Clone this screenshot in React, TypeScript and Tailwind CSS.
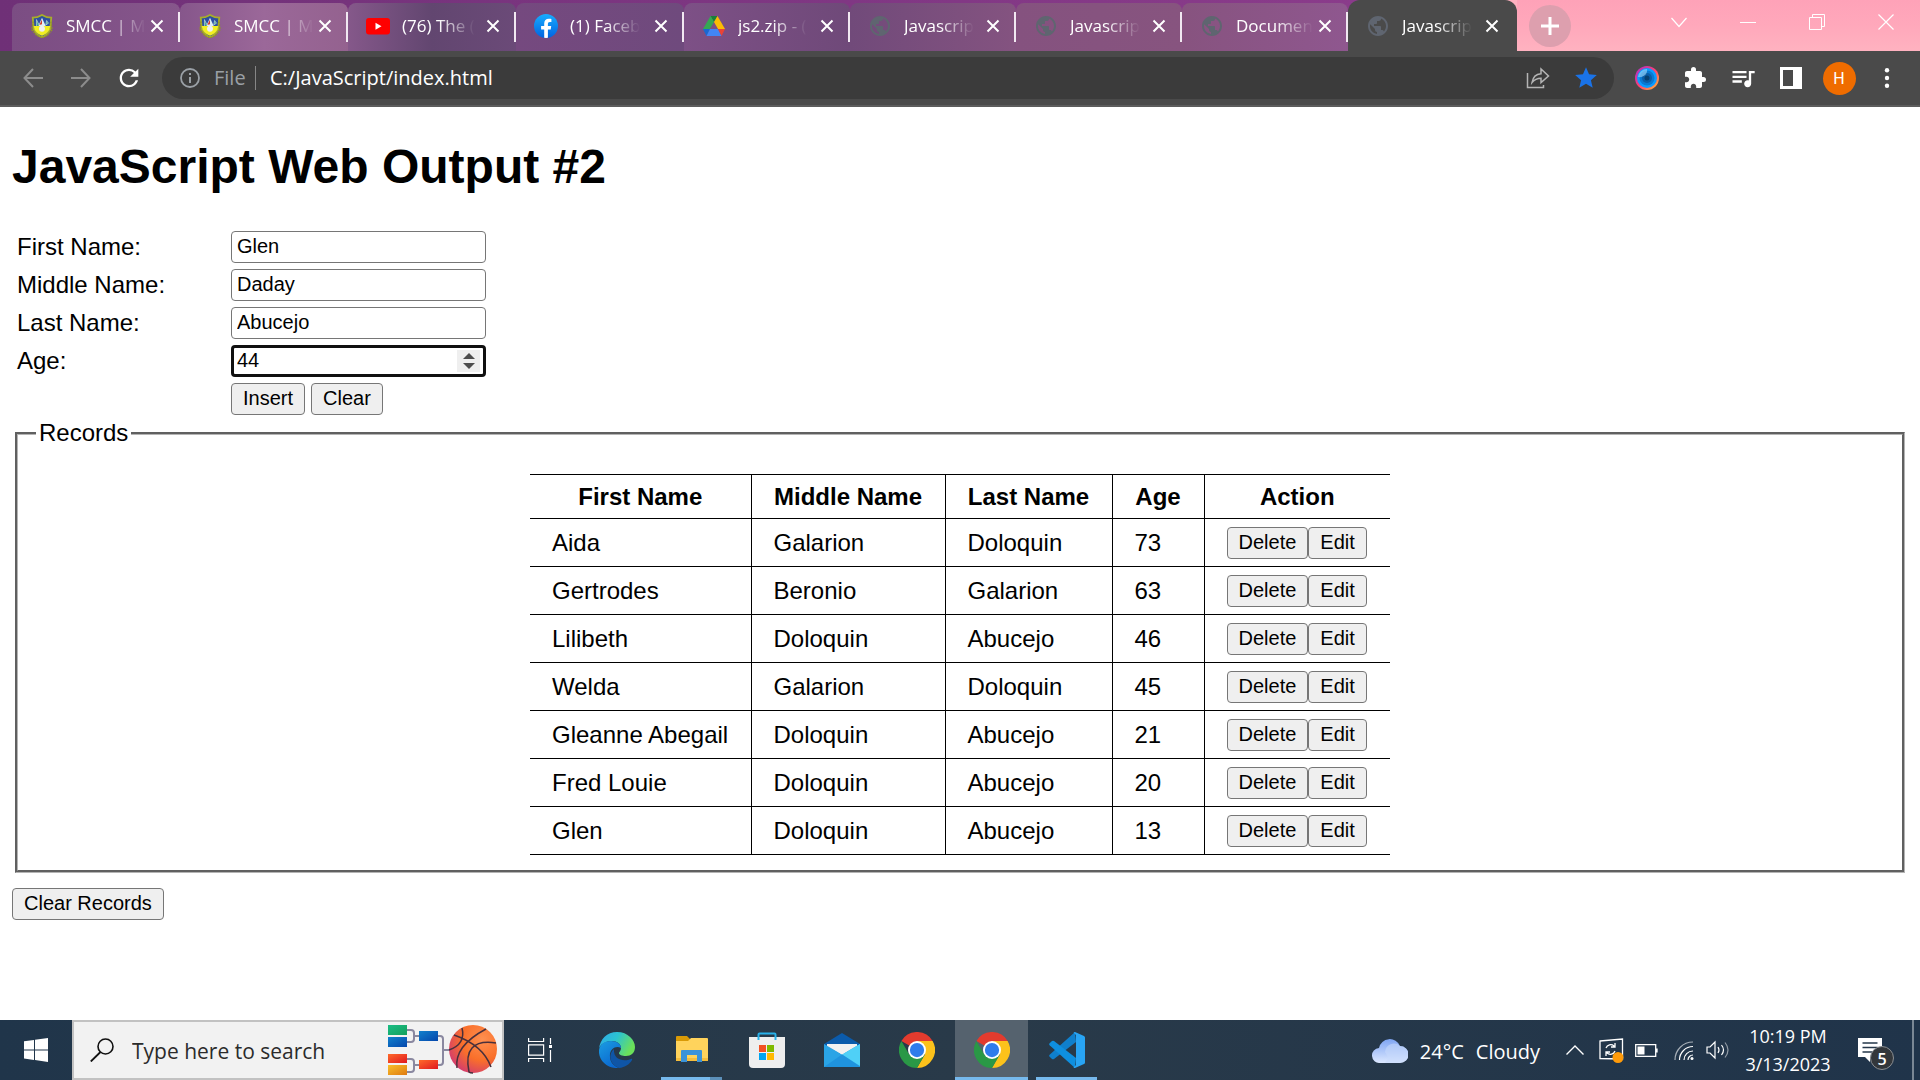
import { useState, type ReactNode } from "react";
import { MdExtension, MdQueueMusic, MdRefresh, MdStar, MdPublic } from "react-icons/md";

type Person = { first: string; middle: string; last: string; age: number };

const initialRecords: Person[] = [
  { first: "Aida", middle: "Galarion", last: "Doloquin", age: 73 },
  { first: "Gertrodes", middle: "Beronio", last: "Galarion", age: 63 },
  { first: "Lilibeth", middle: "Doloquin", last: "Abucejo", age: 46 },
  { first: "Welda", middle: "Galarion", last: "Doloquin", age: 45 },
  { first: "Gleanne Abegail", middle: "Doloquin", last: "Abucejo", age: 21 },
  { first: "Fred Louie", middle: "Doloquin", last: "Abucejo", age: 20 },
  { first: "Glen", middle: "Doloquin", last: "Abucejo", age: 13 },
];

/* ---------- tab icons ---------- */

function CrestIcon() {
  return (
    <svg viewBox="0 0 24 26" className="h-6 w-6">
      <path d="M2 4 Q7 4 12 1 Q17 4 22 4 L21 16 Q18 23 12 25 Q6 23 3 16Z" fill="#2c4fa0" stroke="#a8ad2b" strokeWidth="2" />
      <path d="M3 13H21L20 17Q17 22 12 23.500Q7 22 4 17Z" fill="#f2ef22" />
      <path d="M12 4 16 13H8Z" fill="#dfeef5" />
      <path d="M12 6 9 12l3-1Z" fill="#d33a2c" />
      <path d="M6 13V6l3 6M17 7l2 3-3 2Z" fill="#4fae8d" stroke="#d8e8ee" strokeWidth=".6" />
      <circle cx="12" cy="16" r="3.200" fill="#eeeef0" />
      <path d="M2.500 8 1 17l5 6 6 3 6-3 5-6-1.500-9" fill="none" stroke="#8f9429" strokeWidth="1.500" strokeDasharray="2 1" />
    </svg>
  );
}

function YoutubeIcon() {
  return (
    <svg viewBox="0 0 24 24" className="h-6 w-6">
      <rect x="0" y="4" width="24" height="16.500" rx="3" fill="#f00" />
      <path d="M9.500 8.800v7l6-3.500z" fill="#fff" />
    </svg>
  );
}

function FacebookIcon() {
  return (
    <svg viewBox="0 0 24 24" className="h-6 w-6">
      <defs>
        <linearGradient id="fb" x2="0" y2="1">
          <stop stopColor="#18acfe" />
          <stop offset="1" stopColor="#0163e0" />
        </linearGradient>
      </defs>
      <circle cx="12" cy="12" r="12" fill="url(#fb)" />
      <path d="M16.700 15.500l.5-3.500h-3.300V9.800c0-1 .5-1.900 2-1.900h1.500V5s-1.400-.2-2.700-.2c-2.700 0-4.500 1.700-4.500 4.700V12H7.100v3.500h3.100v8.300a12 12 0 003.700 0v-8.300z" fill="#fff" />
    </svg>
  );
}

function DriveIcon() {
  return (
    <svg viewBox="0 0 24 24" className="h-6 w-6">
      <path d="M8.500 2h7L12 8z" fill="#188038" />
      <path d="M8.500 2 12 8 4.500 20.500 1 15z" fill="#34a853" />
      <path d="M15.500 2 23 15h-7L12 8z" fill="#fbbc04" />
      <path d="M1 15h7l-3.500 7z" fill="#1967d2" />
      <path d="M8 15h8l3.500 7h-15z" fill="#4285f4" />
      <path d="M16 15h7l-3.500 7z" fill="#ea4335" />
    </svg>
  );
}

function Globe() {
  return <MdPublic className="h-6 w-6 text-[#5f6570]" />;
}

function CloseIcon() {
  return (
    <svg viewBox="0 0 14 14" className="h-3.5 w-3.5">
      <path d="M1.500 1.500l11 11M12.500 1.500l-11 11" stroke="#fff" strokeWidth="2" />
    </svg>
  );
}

type TabInfo = { title: string; icon: ReactNode; look: string };

const tabs: TabInfo[] = [
  { title: "SMCC | M", icon: <CrestIcon />, look: "w-[168px] bg-linear-to-r from-[#7b4d83] to-[#86568b]" },
  { title: "SMCC | M", icon: <CrestIcon />, look: "w-[168px] bg-linear-to-r from-[#86568b] via-[#9b6899] to-[#94628f]" },
  { title: "(76) The (", icon: <YoutubeIcon />, look: "w-[168px] bg-linear-to-r from-[#85588a] via-[#624670] to-[#6b4a78]" },
  { title: "(1) Faceb", icon: <FacebookIcon />, look: "w-[168px] bg-linear-to-r from-[#75497f] to-[#6f4a7d]" },
  { title: "js2.zip - (", icon: <DriveIcon />, look: "w-[166px] bg-linear-to-r from-[#7d5086] to-[#6f4979]" },
  { title: "Javascrip", icon: <Globe />, look: "w-[166px] bg-linear-to-r from-[#714a7a] to-[#845380]" },
  { title: "Javascrip", icon: <Globe />, look: "w-[166px] bg-linear-to-r from-[#85527f] to-[#87547f]" },
  { title: "Documen", icon: <Globe />, look: "w-[166px] bg-linear-to-r from-[#87537f] to-[#8f578f]" },
];

function Tab({ title, icon, look, active = false }: TabInfo & { active?: boolean }) {
  return (
    <div
      className={`flex min-w-0 items-center ${look} ${
        active ? "h-[51px] rounded-t-xl" : "mt-[3px] h-12 rounded-t-lg"
      }`}
    >
      <button className={`flex min-w-0 flex-1 items-center gap-3 pl-[18px] ${active ? "" : "-mt-[3px]"}`}>
        <span className="shrink-0">{icon}</span>
        <span className="min-w-0 text-left text-[17px] leading-6 whitespace-nowrap text-white mask-r-from-50%">
          {title}
        </span>
      </button>
      <button aria-label={`Close ${title}`} className={`shrink-0 ${active ? "mr-[18px]" : "mr-3.5 -mt-[3px]"}`}>
        <CloseIcon />
      </button>
      {!active && <span className="h-[30px] w-0.5 shrink-0 bg-[#f1e8f1]" />}
    </div>
  );
}

function TabStrip() {
  return (
    <div className="flex h-[51px] bg-linear-to-r from-[#6f3077] via-[#8c3c8c] via-75% to-[#ffb1c0] to-75% pl-3">
      {tabs.map((t, i) => (
        <Tab key={i} {...t} />
      ))}
      <Tab title="Javascrip" icon={<Globe />} look="w-[169px] bg-[#4a4a4a]" active />
      <div className="flex flex-1 items-center bg-linear-to-b from-[#fea2b8] via-[#ffa8bb] to-[#ffb2c0] pl-3">
        <button aria-label="New tab" className="grid h-[42px] w-[42px] place-items-center rounded-full bg-[#dd9fae]">
          <svg viewBox="0 0 18 18" className="h-[18px] w-[18px]">
            <path d="M9 0v18M0 9h18" stroke="#fff" strokeWidth="3" />
          </svg>
        </button>
        <div className="mb-2 ml-auto flex h-8 items-center">
          <button aria-label="Search tabs" className="grid w-[69px] place-items-center">
            <svg viewBox="0 0 16 16" className="h-4 w-4">
              <path d="M.5 4 8 12.500 15.500 4" fill="none" stroke="#fff" strokeWidth="1.200" />
            </svg>
          </button>
          <button aria-label="Minimize" className="grid w-[69px] place-items-center">
            <svg viewBox="0 0 16 16" className="h-4 w-4">
              <path d="M0 8.500h16" stroke="#fff" />
            </svg>
          </button>
          <button aria-label="Restore" className="grid w-[69px] place-items-center">
            <svg viewBox="0 0 16 16" className="h-4 w-4">
              <path d="M.5 3.500h12v12H.5zM3.500 3.500V.5h12v12h-3" fill="none" stroke="#fff" />
            </svg>
          </button>
          <button aria-label="Close window" className="grid w-[69px] place-items-center">
            <svg viewBox="0 0 16 16" className="h-4 w-4">
              <path d="M.5.500l15 15M15.500.500l-15 15" stroke="#fff" strokeWidth="1.200" />
            </svg>
          </button>
        </div>
      </div>
    </div>
  );
}

/* ---------- toolbar ---------- */

const toolButton = "grid h-8 w-12 shrink-0 place-items-center";

function Arrow({ flip = false }: { flip?: boolean }) {
  return (
    <svg viewBox="0 0 20 20" className={flip ? "h-5 w-5 rotate-180" : "h-5 w-5"}>
      <path d="M20 10H1.500M10 1 1.500 10l8.500 9" fill="none" stroke="#8c8c8c" strokeWidth="2" />
    </svg>
  );
}

function Toolbar() {
  return (
    <div className="flex h-14 items-center border-b-2 border-[#5c5c5c] bg-[#4a4a4a] px-[9px]">
      <button aria-label="Back" className={toolButton}>
        <Arrow />
      </button>
      <button aria-label="Forward" className={toolButton}>
        <Arrow flip />
      </button>
      <button aria-label="Reload" className={toolButton}>
        <MdRefresh className="h-7 w-7 text-white" />
      </button>
      <div className="ml-[9px] flex h-[42px] flex-1 items-center rounded-full bg-[#3b3b3b] pr-1 pl-[18px] text-xl">
        <svg viewBox="0 0 20 20" className="h-5 w-5">
          <circle cx="10" cy="10" r="9" fill="none" stroke="#9aa0a6" strokeWidth="1.800" />
          <path d="M10 9v6M10 5v2" stroke="#9aa0a6" strokeWidth="2" />
        </svg>
        <span className="ml-3.5 w-[41px] text-[#9aa0a6]">File</span>
        <span className="h-6 w-px bg-[#868686]" />
        <input aria-label="Address" defaultValue="C:/JavaScript/index.html" className="ml-3.5 min-w-0 flex-1 text-white outline-none" />
        <button aria-label="Share" className={toolButton}>
          <svg viewBox="0 0 24 24" className="h-6 w-6">
            <path d="M1.500 7v14.500h16V19M6 16.500c1-6 4-8.500 9-8.800V3l7.500 7-7.500 6.500v-4.300c-4 0-6.500 1.200-9 4.300z" fill="none" stroke="#b4b4b4" strokeWidth="1.500" />
          </svg>
        </button>
        <button aria-label="Bookmark" className={toolButton}>
          <MdStar className="h-[26px] w-[26px] text-[#1a73e8]" />
        </button>
      </div>
      <div className="ml-[9px] flex items-center">
        <button aria-label="Lens extension" className={toolButton}>
          <svg viewBox="0 0 24 24" className="h-6 w-6">
            <defs>
              <linearGradient id="ring" x1="0" x2="1" y2="1">
                <stop stopColor="#a12fd0" />
                <stop offset=".5" stopColor="#ff3f74" />
                <stop offset="1" stopColor="#ffc22e" />
              </linearGradient>
            </defs>
            <circle cx="12" cy="12" r="12" fill="url(#ring)" />
            <circle cx="12" cy="12" r="10" fill="#0a9cff" />
            <circle cx="12" cy="12" r="7.500" fill="#0879d2" />
            <circle cx="12" cy="12" r="5" fill="#0a5da6" />
            <circle cx="12" cy="12" r="2.500" fill="#07406f" />
            <path d="M3 11a9 9 0 0 1 9-8c1 4-3 9-9 8z" fill="#9bd3f5" opacity=".65" />
          </svg>
        </button>
        <button aria-label="Extensions" className={toolButton}>
          <MdExtension className="h-6 w-6 text-white" />
        </button>
        <button aria-label="Media" className={toolButton}>
          <MdQueueMusic className="h-7 w-7 text-white" />
        </button>
        <button aria-label="Side panel" className={toolButton}>
          <svg viewBox="0 0 22 22" className="h-[22px] w-[22px]">
            <path d="M0 0h22v22H0zM3 3v16h10V3z" fill="#fff" fillRule="evenodd" />
          </svg>
        </button>
        <button aria-label="Profile" className={toolButton}>
          <span className="grid h-[33px] w-[33px] place-items-center rounded-full bg-[#ef6c00] font-[Roboto] text-base text-white">H</span>
        </button>
        <button aria-label="Menu" className={toolButton}>
          <svg viewBox="0 0 20 20" className="h-5 w-5" fill="#fff">
            <circle cx="10" cy="2.200" r="2.200" />
            <circle cx="10" cy="10" r="2.200" />
            <circle cx="10" cy="17.800" r="2.200" />
          </svg>
        </button>
      </div>
    </div>
  );
}

/* ---------- page ---------- */

const pageButton =
  "h-8 rounded border border-[#767676] bg-[#efefef] px-[11px] pb-0.5 text-xl leading-6 text-black hover:bg-[#e5e5e5]";
const textBox = "h-8 w-[255px] rounded border border-[#767676] bg-white px-[5px] pb-0.5 text-xl leading-6";

const columns = [
  { label: "First Name", width: "w-[221px]" },
  { label: "Middle Name", width: "w-[194px]" },
  { label: "Last Name", width: "w-[167px]" },
  { label: "Age", width: "w-[92px]" },
  { label: "Action", width: "w-[186px]" },
];

const cell = "border-y border-black px-[22px] not-first:border-l";

function Page() {
  const [form, setForm] = useState({ first: "Glen", middle: "Daday", last: "Abucejo", age: "44" });
  const [records, setRecords] = useState(initialRecords);
  const set = (key: keyof typeof form, value: string) => setForm({ ...form, [key]: value });
  const clear = () => setForm({ first: "", middle: "", last: "", age: "" });
  const step = (by: number) => set("age", String(Number(form.age) + by));
  const remove = (i: number) => setRecords(records.filter((_, n) => n !== i));
  const insert = () => {
    setRecords([...records, { first: form.first, middle: form.middle, last: form.last, age: Number(form.age) }]);
    clear();
  };
  const edit = (i: number) => {
    setForm({ ...records[i], age: String(records[i].age) });
    remove(i);
  };

  return (
    <main className="flex-1 bg-white px-3 pt-8 font-['Liberation_Sans',sans-serif] text-2xl leading-7 text-black">
      <h1 className="text-5xl leading-14 font-bold">JavaScript Web Output #2</h1>
      <div className="mt-9 grid grid-cols-[214px_1fr] items-center gap-y-1.5 pl-[5px]">
        <label htmlFor="first">First Name:</label>
        <input id="first" className={textBox} value={form.first} onChange={(e) => set("first", e.target.value)} />
        <label htmlFor="middle">Middle Name:</label>
        <input id="middle" className={textBox} value={form.middle} onChange={(e) => set("middle", e.target.value)} />
        <label htmlFor="last">Last Name:</label>
        <input id="last" className={textBox} value={form.last} onChange={(e) => set("last", e.target.value)} />
        <label htmlFor="age">Age:</label>
        <div className="relative w-[255px]">
          <input
            id="age"
            type="number"
            value={form.age}
            onChange={(e) => set("age", e.target.value)}
            className="block h-8 w-full rounded border-[3px] border-[#101010] bg-white px-[3px] pb-0.5 text-xl leading-6 outline-none [appearance:textfield] [&::-webkit-inner-spin-button]:appearance-none"
          />
          <div className="absolute inset-y-[5px] right-1.5 flex w-[23px] flex-col items-center justify-center gap-1 bg-[#efefef]">
            <button aria-label="Increase age" onClick={() => step(1)}>
              <svg viewBox="0 0 12 6" className="h-1.5 w-3">
                <path d="M0 6h12L6 0z" fill="#4d4d4d" />
              </svg>
            </button>
            <button aria-label="Decrease age" onClick={() => step(-1)}>
              <svg viewBox="0 0 12 6" className="h-1.5 w-3">
                <path d="M0 0h12L6 6z" fill="#4d4d4d" />
              </svg>
            </button>
          </div>
        </div>
        <div className="col-start-2 flex gap-1.5">
          <button className={pageButton} onClick={insert}>Insert</button>
          <button className={pageButton} onClick={clear}>Clear</button>
        </div>
      </div>
      <fieldset className="mx-[3px] mt-1 border-[3px] border-[#b4b4b4] px-[18px] pt-[27px] pb-[15px] [border-style:groove]">
        <legend className="px-[3px]">Records</legend>
        <table className="mx-auto table-fixed border-collapse">
          <thead>
            <tr className="h-11">
              {columns.map((c) => (
                <th key={c.label} className={`${cell} ${c.width} whitespace-nowrap`}>{c.label}</th>
              ))}
            </tr>
          </thead>
          <tbody>
            {records.map((r, i) => (
              <tr key={i} className="h-12">
                <td className={`${cell} whitespace-nowrap`}>{r.first}</td>
                <td className={cell}>{r.middle}</td>
                <td className={cell}>{r.last}</td>
                <td className={cell}>{r.age}</td>
                <td className={cell}>
                  <div className="flex">
                    <button className={pageButton} onClick={() => remove(i)}>Delete</button>
                    <button className={pageButton} onClick={() => edit(i)}>Edit</button>
                  </div>
                </td>
              </tr>
            ))}
          </tbody>
        </table>
      </fieldset>
      <button className={`${pageButton} mt-[15px] block`} onClick={() => setRecords([])}>Clear Records</button>
    </main>
  );
}

/* ---------- taskbar ---------- */

function BracketArt() {
  return (
    <svg viewBox="0 0 110 52" className="mr-1 h-[52px] w-[110px] shrink-0">
      <defs>
        <linearGradient id="green" x2="1" y2="1"><stop stopColor="#1bbd85" /><stop offset="1" stopColor="#12a05c" /></linearGradient>
        <linearGradient id="blue" x2="1" y2="1"><stop stopColor="#1180cc" /><stop offset="1" stopColor="#0547ac" /></linearGradient>
        <linearGradient id="red" x2="1" y2="1"><stop stopColor="#ff6a2a" /><stop offset="1" stopColor="#e0181f" /></linearGradient>
        <linearGradient id="gold" x2="1" y2="1"><stop stopColor="#f9be2a" /><stop offset="1" stopColor="#df7a10" /></linearGradient>
        <radialGradient id="ball" cx=".7" cy=".3" r=".8"><stop stopColor="#ff9050" /><stop offset=".55" stopColor="#f96f2a" /><stop offset="1" stopColor="#d23a70" /></radialGradient>
      </defs>
      <path d="M19 6h4q3 0 3 3v6q0 3-3 3h-4M26 12h6M19 35h4q3 0 3 3v7q0 3-3 3h-4M26 41h6M50 12h2q3 0 3 3v23q0 3-3 3h-2M55 26h7" fill="none" stroke="#8a88a0" strokeWidth="2" />
      <rect y="1" width="19" height="10" fill="url(#green)" />
      <rect y="13" width="19" height="10" fill="url(#blue)" />
      <rect y="30" width="19" height="9" fill="url(#red)" />
      <rect y="41" width="19" height="10" fill="url(#gold)" />
      <rect x="31" y="7" width="19" height="10" fill="url(#blue)" />
      <rect x="31" y="36" width="19" height="9" fill="url(#red)" />
      <circle cx="85" cy="25" r="24" fill="url(#ball)" />
      <path d="M66 11q29 10 37 32M61 26q17-6 13-22M98 5Q66 22 69 44M108 19Q74 14 81 48Q82 49 85 49" fill="none" stroke="#49303c" strokeWidth="1.500" />
    </svg>
  );
}

function EdgeIcon() {
  return (
    <svg viewBox="0 0 36 36" className="h-9 w-9">
      <defs>
        <linearGradient id="edgeTop" x2="1" y2=".4"><stop stopColor="#2fa8ea" /><stop offset=".5" stopColor="#2bc3d2" /><stop offset="1" stopColor="#6be05a" /></linearGradient>
        <linearGradient id="edgeBody" x2=".6" y2="1"><stop stopColor="#1b9de2" /><stop offset="1" stopColor="#0a66cf" /></linearGradient>
      </defs>
      <path d="M0 17C1 7 8 0 18 0c11 0 18 8 18 15 0 6-4 9-9 9-4 0-7-1-7-3 0-1 2-2 2-5 0-4-4-7-9-7C7 9 1 12 0 17z" fill="url(#edgeTop)" />
      <path d="M0 18C1 12 6 9 12 9c6 0 10 3 10 7-5-3-12 1-11 9 0 5 4 9 9 11C8 37-1 28 0 18z" fill="url(#edgeBody)" />
      <path d="M15 17c-6 5-5 15 5 19 6-.5 11-4 13-8 .5-1-.3-1.500-1-1-7 3-18 1-17-10z" fill="#0f55a6" />
    </svg>
  );
}

function FolderIcon() {
  return (
    <svg viewBox="0 0 32 28" className="h-7 w-8">
      <path d="M0 1q0-1 1-1h10l4 4v4H0z" fill="#d99a06" />
      <path d="M0 5h12l3-3h16q1 0 1 1v22H0z" fill="#ffd35c" />
      <path d="M0 22h32v3H0z" fill="#f5bd3c" />
      <path d="M5 26V15q0-1 1-1h19q1 0 1 1v11h-5v-7H11v7z" fill="#3b93d9" />
    </svg>
  );
}

function StoreIcon() {
  return (
    <svg viewBox="0 0 36 36" className="h-9 w-9">
      <path d="M0 5h36v27q0 4-4 4H4q-4 0-4-4z" fill="#eeeeee" />
      <path d="M9.500 8V2.500q0-1 1-1h15q1 0 1 1V8" fill="none" stroke="#28b1ea" strokeWidth="2" />
      <path d="M10 13h7v7h-7z" fill="#f25022" />
      <path d="M18 13h7v7h-7z" fill="#7fba00" />
      <path d="M10 21h7v7h-7z" fill="#00a4ef" />
      <path d="M18 21h7v7h-7z" fill="#ffb900" />
    </svg>
  );
}

function MailIcon() {
  return (
    <svg viewBox="0 0 36 34" className="h-[34px] w-9">
      <path d="M0 11 18 0l18 11v6H0z" fill="#0b5bab" />
      <path d="M3 11h30v3L18 22 3 14z" fill="#f1f1f1" />
      <path d="M0 11 18 21.500 36 11v23H0z" fill="#2aa4e6" />
      <path d="M36 11v22L18 21.500z" fill="#4fd0f7" />
      <path d="M3 11h30L18 21.500z" fill="#f1f1f1" />
      <path d="M36 33.500 18 21.500 0 34h36z" fill="#1f93de" />
    </svg>
  );
}

function ChromeIcon() {
  return (
    <svg viewBox="0 0 48 48" className="h-9 w-9">
      <path d="M24 24 3.200 12A24 24 0 0 1 44.800 12z" fill="#e33b2e" />
      <path d="M24 12h20.800A24 24 0 0 1 24 48l10.400-18z" fill="#fcc21b" />
      <path d="M3.200 12A24 24 0 0 0 24 48l10.400-18-20.800 0z" fill="#2a9846" />
      <circle cx="24" cy="24" r="12" fill="#fff" />
      <circle cx="24" cy="24" r="9.500" fill="#2f7cec" />
    </svg>
  );
}

function CodeIcon() {
  return (
    <svg viewBox="0 0 36 36" className="h-9 w-9">
      <path d="M26 0 27 10 5 27q-1 .7-2 0L.6 24.800q-1-1 0-2z" fill="#0f7fcc" />
      <path d="M26 36 27 26 5 9q-1-.7-2 0L.6 11.200q-1 1 0 2z" fill="#0e8fe0" />
      <path d="M26 0l9 4q1 .5 1 1.500v25q0 1-1 1.500l-9 4q-1 .3-1.500-.5L27 33V3L24.500.500Q25 0 26 0z" fill="#28a4f4" />
    </svg>
  );
}

const apps = [
  { name: "Microsoft Edge", icon: <EdgeIcon />, bar: "" },
  { name: "File Explorer", icon: <FolderIcon />, bar: "bg-linear-to-r from-[#76b9ed] from-80% to-[#5c90ba] to-80%" },
  { name: "Microsoft Store", icon: <StoreIcon />, bar: "" },
  { name: "Mail", icon: <MailIcon />, bar: "" },
  { name: "Google Chrome", icon: <ChromeIcon />, bar: "" },
  { name: "Google Chrome window", icon: <ChromeIcon />, bar: "bg-[#76b9ed]", active: true },
  { name: "Visual Studio Code", icon: <CodeIcon />, bar: "bg-[#76b9ed]" },
];

function Taskbar() {
  return (
    <footer className="flex h-[60px] items-stretch bg-linear-to-r from-[#20354a] via-[#293a49] to-[#20344a] text-white">
      <button aria-label="Start" className="grid w-[72px] place-items-center">
        <svg viewBox="0 0 24 24" className="h-6 w-6" fill="#fff">
          <path d="M0 3.300 10 2v9.400H0zM11 1.800 24 0v11.400H11zM0 12.400h10V22L0 20.600zM11 12.400h13V24l-13-1.900z" />
        </svg>
      </button>
      <label className="flex w-[432px] items-center border-2 border-[#c2c2c2] bg-[#f2f2f2] pl-4">
        <svg viewBox="0 0 24 24" className="h-6 w-6 shrink-0">
          <circle cx="15.500" cy="8.500" r="7.500" fill="none" stroke="#111" strokeWidth="1.600" />
          <path d="M10.500 14 .8 23.500" stroke="#111" strokeWidth="1.800" />
        </svg>
        <input
          aria-label="Search"
          placeholder="Type here to search"
          className="ml-[18px] min-w-0 flex-1 pt-1 text-[21px] outline-none placeholder:text-[#2b2b2b]"
        />
        <BracketArt />
      </label>
      <button aria-label="Task view" className="mr-1 grid w-[72px] place-items-center">
        <svg viewBox="0 0 24 24" className="h-6 w-6" fill="none" stroke="#fff" strokeWidth="1.200">
          <path d="M.6 0v3.500h15V0M.6 24v-3.500h15V24M.6 6.800h15v10.400H.6zM22.500 0v6M22.500 12v12" />
          <path d="M21 7h3v3h-3z" fill="#fff" stroke="none" />
        </svg>
      </button>
      {apps.map((a) => (
        <button
          key={a.name}
          aria-label={a.name}
          className={`mr-0.5 flex w-[73px] flex-col items-center ${a.active ? "bg-[#55626e]" : ""}`}
        >
          <span className="grid w-full flex-1 place-items-center pt-[3px]">{a.icon}</span>
          <span className={`h-[3px] ${a.active ? "w-full" : "w-[61px]"} ${a.bar}`} />
        </button>
      ))}
      <div className="ml-auto flex items-center">
        <button className="flex items-center text-left text-xl">
          <svg viewBox="0 0 36 26" className="mr-3 h-[26px] w-9">
            <defs>
              <linearGradient id="cloud" x2="0" y2="1"><stop stopColor="#7fa5f3" /><stop offset="1" stopColor="#dce8ff" /></linearGradient>
            </defs>
            <path d="M8 26a7.500 7.500 0 0 1-1-15A11 11 0 0 1 28 9a8.500 8.500 0 0 1 0 17z" fill="url(#cloud)" />
            <path d="M13 15a9 9 0 0 1 15-6 8.500 8.500 0 0 1 0 17H13q5-5 0-11z" fill="#c9dafc" opacity=".55" />
          </svg>
          <span className="w-14 pt-1">24°C</span>
          <span className="pt-1">Cloudy</span>
        </button>
        <button aria-label="Hidden icons" className="ml-[26px]">
          <svg viewBox="0 0 18 10" className="h-2.5 w-[18px]">
            <path d="M.5 9.500 9 1l8.500 8.500" fill="none" stroke="#fff" strokeWidth="1.400" />
          </svg>
        </button>
        <button aria-label="Update" className="ml-[15px]">
          <svg viewBox="0 0 25 25" className="h-[25px] w-[25px]" fill="none" stroke="#fff" strokeWidth="1.300">
            <path d="M1 3 23.500 1v20L1 20.500z" />
            <path d="M7 10a5 5 0 0 1 8-2l1 1M16 5v4h-4M16 13a5 5 0 0 1-8 2l-1-1M7 18v-4h4" />
            <circle cx="19" cy="19.500" r="5.500" fill="#ff9b0a" stroke="none" />
          </svg>
        </button>
        <button aria-label="Battery" className="ml-[11px]">
          <svg viewBox="0 0 23 13" className="h-[13px] w-[23px]">
            <path d="M.7.700h20v11.600H.7zM22 4.500v4" fill="none" stroke="#fff" strokeWidth="1.300" />
            <path d="M2.500 2.500h7v8h-7z" fill="#fff" />
          </svg>
        </button>
        <button aria-label="Network" className="ml-4">
          <svg viewBox="0 0 20 20" className="h-5 w-5" fill="none" stroke="#fff" strokeWidth="1.200">
            <path d="M1 20A18 18 0 0 1 19 2" opacity=".6" />
            <path d="M5.500 20A13.500 13.500 0 0 1 19 6.500M10 20a9 9 0 0 1 9-9M14 20a5 5 0 0 1 5-5" />
            <circle cx="18" cy="18.500" r="1.500" fill="#fff" stroke="none" />
          </svg>
        </button>
        <button aria-label="Volume" className="ml-3">
          <svg viewBox="0 0 24 20" className="h-5 w-6" fill="none" stroke="#fff" strokeWidth="1.200">
            <path d="M1 7h3l5-5v16l-5-5H1zM12 7q2 3 0 6M15.500 5q4 5 0 10" />
            <path d="M19 2.500q6 7.500 0 15" opacity=".5" />
          </svg>
        </button>
        <button className="ml-3 w-[92px] text-center text-lg leading-7">
          <span className="block">10:19 PM</span>
          <span className="block">3/13/2023</span>
        </button>
        <button aria-label="5 notifications" className="relative ml-6 h-10 w-9">
          <svg viewBox="0 0 24 24" className="h-6 w-6">
            <path d="M0 0h24v19H12v5l-5-5H0z" fill="#fff" />
            <path d="M4.500 5h15M4.500 9.500h15M4.500 14h10" stroke="#25374a" strokeWidth="1.400" />
          </svg>
          <span className="absolute right-0 bottom-0 grid h-6 w-6 place-items-center rounded-full border border-[#8b8f93] bg-[#33373b] text-base font-semibold">
            5
          </span>
        </button>
        <span className="ml-[18px] h-full w-2 border-l-2 border-[#7a8794]" />
      </div>
    </footer>
  );
}

export default function App() {
  return (
    <div className="flex min-h-screen flex-col bg-white font-['Open_Sans',sans-serif]">
      <header>
        <TabStrip />
        <Toolbar />
      </header>
      <Page />
      <Taskbar />
    </div>
  );
}
